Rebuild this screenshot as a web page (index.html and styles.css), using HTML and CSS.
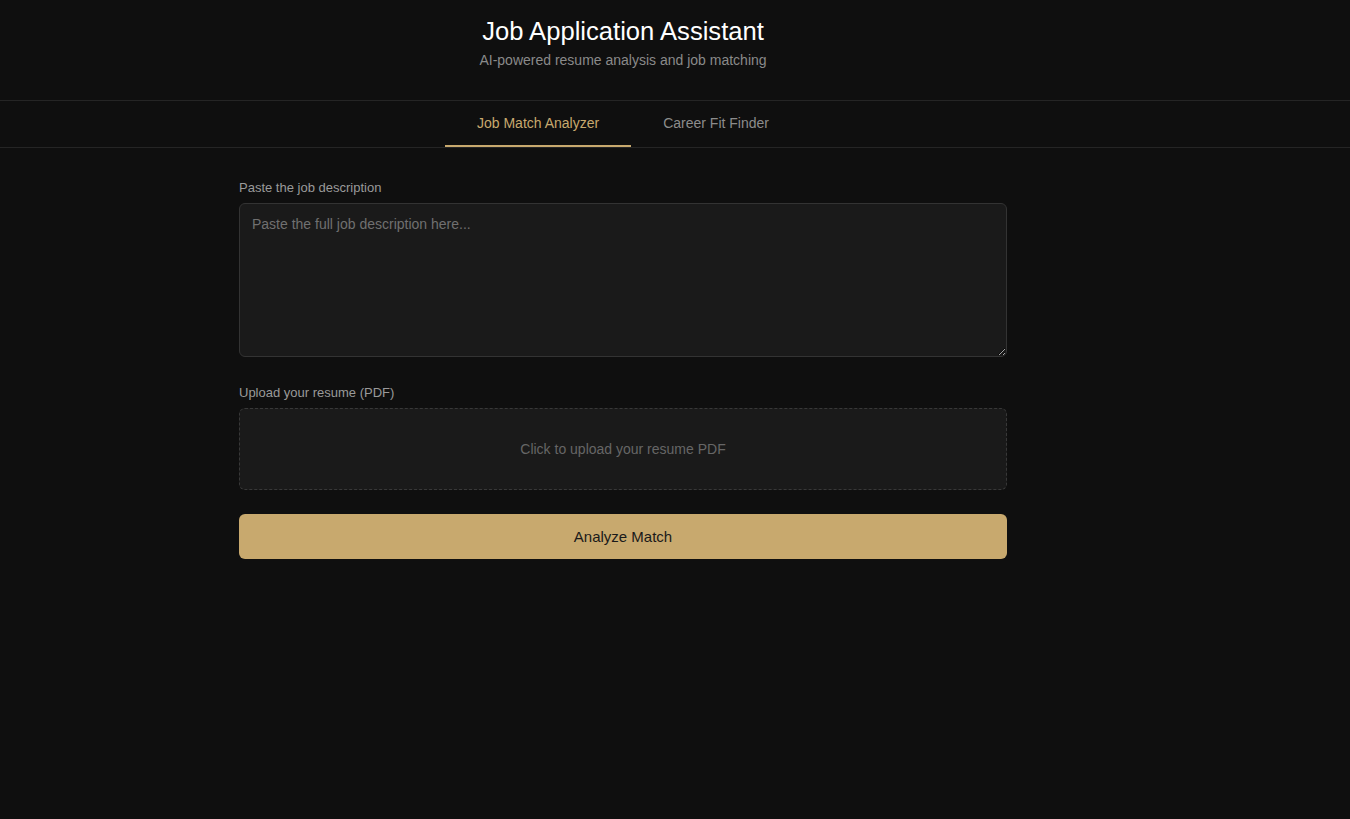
FILE: index.html
```html
<!DOCTYPE html>
<html lang="en">
<head>
<meta charset="utf-8">
<title>Job Application Assistant</title>
<link rel="stylesheet" href="styles.css">
</head>
<body>
<header class="header">
  <div class="inner">
    <h1 class="title">Job Application Assistant</h1>
    <p class="subtitle">AI-powered resume analysis and job matching</p>
  </div>
</header>
<nav class="tabs">
  <div class="inner tab-row">
    <button class="tab active">Job Match Analyzer</button>
    <button class="tab">Career Fit Finder</button>
  </div>
</nav>
<div class="inner">
  <main class="content">
    <label class="label" for="jd">Paste the job description</label>
    <textarea id="jd" class="textarea" placeholder="Paste the full job description here..."></textarea>
    <label class="label label-gap">Upload your resume (PDF)</label>
    <div class="upload">Click to upload your resume PDF</div>
    <button class="analyze">Analyze Match</button>
  </main>
</div>
</body>
</html>
```

FILE: styles.css
```css
html, body {
  margin: 0;
  padding: 0;
  background: #0f0f0f;
  font-family: "Liberation Sans", Arial, sans-serif;
}
body {
  min-height: 819px;
}
.inner {
  width: 1246px;
}
.header {
  padding: 16px 0 30px;
  text-align: center;
  border-bottom: 1px solid #252525;
}
.title {
  margin: 0;
  font-size: 25.6px;
  line-height: 30px;
  font-weight: 400;
  color: #ffffff;
}
.subtitle {
  margin: 4px 0 0;
  font-size: 14px;
  line-height: 20px;
  color: #8a8a8a;
}
.tabs {
  border-bottom: 1px solid #252525;
}
.tab-row {
  display: flex;
  justify-content: center;
}
.tab {
  background: none;
  border: none;
  border-bottom: 2px solid transparent;
  padding: 0 32px;
  height: 46px;
  font-family: inherit;
  font-size: 14px;
  color: #8c8c8c;
  cursor: pointer;
}
.tab.active {
  color: #c8a96e;
  border-bottom-color: #c8a96e;
}
.content {
  width: 768px;
  margin: 0 auto;
  padding-top: 33px;
  display: flex;
  flex-direction: column;
}
.label {
  font-size: 13px;
  line-height: 14px;
  font-weight: 400;
  color: #9a9a9a;
  margin-bottom: 8px;
}
.label-gap {
  margin-top: 29px;
}
.textarea {
  box-sizing: border-box;
  height: 154px;
  background: #1a1a1a;
  border: 1px solid #333;
  border-radius: 6px;
  padding: 11px 12px;
  font-family: inherit;
  font-size: 14px;
  line-height: 18px;
  color: #ddd;
  resize: vertical;
  outline: none;
}
.textarea::placeholder {
  color: #707070;
}
.upload {
  box-sizing: border-box;
  height: 82px;
  background: #1a1a1a;
  border: 1px dashed #383838;
  border-radius: 6px;
  display: flex;
  align-items: center;
  justify-content: center;
  font-size: 14px;
  color: #666;
  cursor: pointer;
}
.analyze {
  margin-top: 24px;
  height: 45px;
  border: none;
  border-radius: 6px;
  background: #c8a96e;
  color: #1a1a1a;
  font-family: inherit;
  font-size: 15px;
  cursor: pointer;
}
```
